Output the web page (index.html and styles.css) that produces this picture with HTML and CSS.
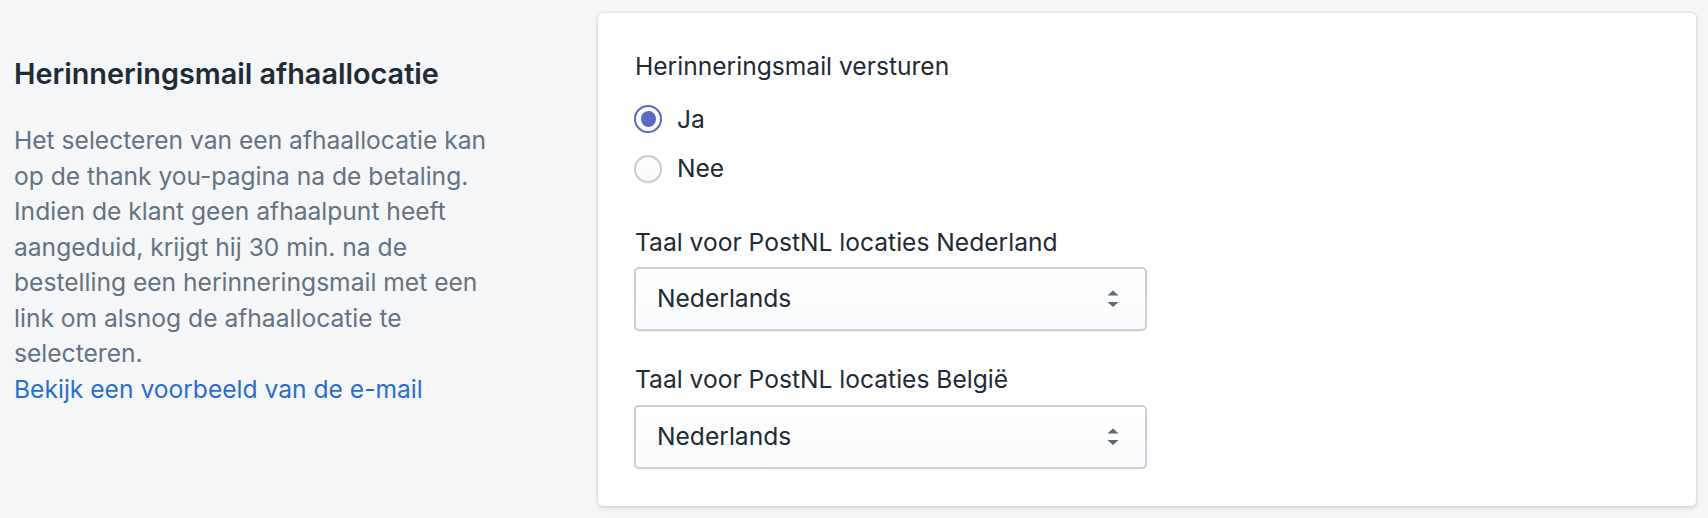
FILE: index.html
```html
<!DOCTYPE html>
<html lang="nl">
<head>
<meta charset="utf-8">
<title>Herinneringsmail afhaallocatie</title>
<link rel="stylesheet" href="styles.css">
</head>
<body>
<main class="page">
  <section class="annotated">
    <div class="annotation">
      <h2 class="annotation-title">Herinneringsmail afhaallocatie</h2>
      <div class="annotation-desc">
        <p>Het selecteren van een afhaallocatie kan op de thank you-pagina na de betaling. Indien de klant geen afhaalpunt heeft aangeduid, krijgt hij 30 min. na de bestelling een herinneringsmail met een link om alsnog de afhaallocatie te selecteren.</p>
        <a class="link" href="#">Bekijk een voorbeeld van de e-mail</a>
      </div>
    </div>
    <div class="card">
      <div class="form">
        <fieldset class="field choice-field">
          <legend class="label">Herinneringsmail versturen</legend>
          <ul class="choices">
            <li class="choice"><span class="radio radio-checked"></span><span>Ja</span></li>
            <li class="choice"><span class="radio"></span><span>Nee</span></li>
          </ul>
        </fieldset>
        <div class="field">
          <div class="label">Taal voor PostNL locaties Nederland</div>
          <div class="select">
            <span class="select-value">Nederlands</span>
            <svg class="select-arrows" width="12" height="18" viewBox="0 0 12 18"><path d="M6 0.5 L11.5 5.5 H0.5 Z M0.5 12 H11.5 L6 17 Z" fill="#5c6874"/></svg>
          </div>
        </div>
        <div class="field">
          <div class="label">Taal voor PostNL locaties België</div>
          <div class="select">
            <span class="select-value">Nederlands</span>
            <svg class="select-arrows" width="12" height="18" viewBox="0 0 12 18"><path d="M6 0.5 L11.5 5.5 H0.5 Z M0.5 12 H11.5 L6 17 Z" fill="#5c6874"/></svg>
          </div>
        </div>
      </div>
    </div>
  </section>
</main>
</body>
</html>
```

FILE: styles.css
```css
* { box-sizing: border-box; }

body {
  margin: 0;
  background: #f4f6f8;
  font-family: Inter, "Noto Sans", sans-serif;
  font-size: 24.6px;
  line-height: 35.5px;
  color: #212b36;
}

.annotated {
  display: flex;
  gap: 64px;
  padding: 13px 12px 13px 14px;
}

.annotation {
  width: 520px;
  flex: none;
  padding-top: 40px;
}

.annotation-title {
  margin: 0;
  font-size: 28.8px;
  line-height: 42px;
  font-weight: 600;
  color: #212b36;
}

.annotation-desc {
  width: 505px;
  margin-top: 28px;
  color: #637381;
}

.annotation-desc p {
  margin: 0;
}

.link {
  display: block;
  color: #2c6ecb;
  text-decoration: none;
}

.card {
  flex: 1;
  background: #fff;
  border-radius: 5px;
  box-shadow: 0 0 0 1.5px rgba(63, 63, 68, 0.06), 0 2px 5px 0 rgba(63, 63, 68, 0.14);
  padding: 36px 37px 37px 37px;
}

.form {
  display: flex;
  flex-direction: column;
  gap: 31px;
}

.field {
  margin: 0;
  padding: 0;
  border: 0;
  min-width: 0;
}

.label {
  display: block;
  padding: 0 0 7px 0;
}

.choice-field .label {
  padding-bottom: 10px;
}

.choices {
  list-style: none;
  margin: 0;
  padding: 0;
}

.choice {
  display: flex;
  align-items: center;
  gap: 15px;
  padding: 7px 0;
  margin-left: -1px;
}

.radio {
  width: 28px;
  height: 28px;
  flex: none;
  border-radius: 50%;
  border: 2px solid #c4cdd5;
  background: linear-gradient(180deg, #fff, #f9fafb);
  box-shadow: 0 1px 0 rgba(22, 29, 37, 0.05);
  display: flex;
  align-items: center;
  justify-content: center;
}

.radio-checked {
  border-color: #5c6ac4;
  background: #fff;
}

.radio-checked::after {
  content: "";
  width: 15px;
  height: 16px;
  border-radius: 50%;
  background: #5c6ac4;
}

.select {
  width: 513px;
  height: 64px;
  margin-left: -1px;
  display: flex;
  align-items: center;
  justify-content: space-between;
  padding: 0 26px 0 21px;
  border: 2px solid #c9d0d7;
  border-radius: 5px;
  background: linear-gradient(180deg, #fff, #f9fafb);
  box-shadow: 0 1px 0 rgba(22, 29, 37, 0.05);
}

.select-arrows {
  display: block;
}
```
